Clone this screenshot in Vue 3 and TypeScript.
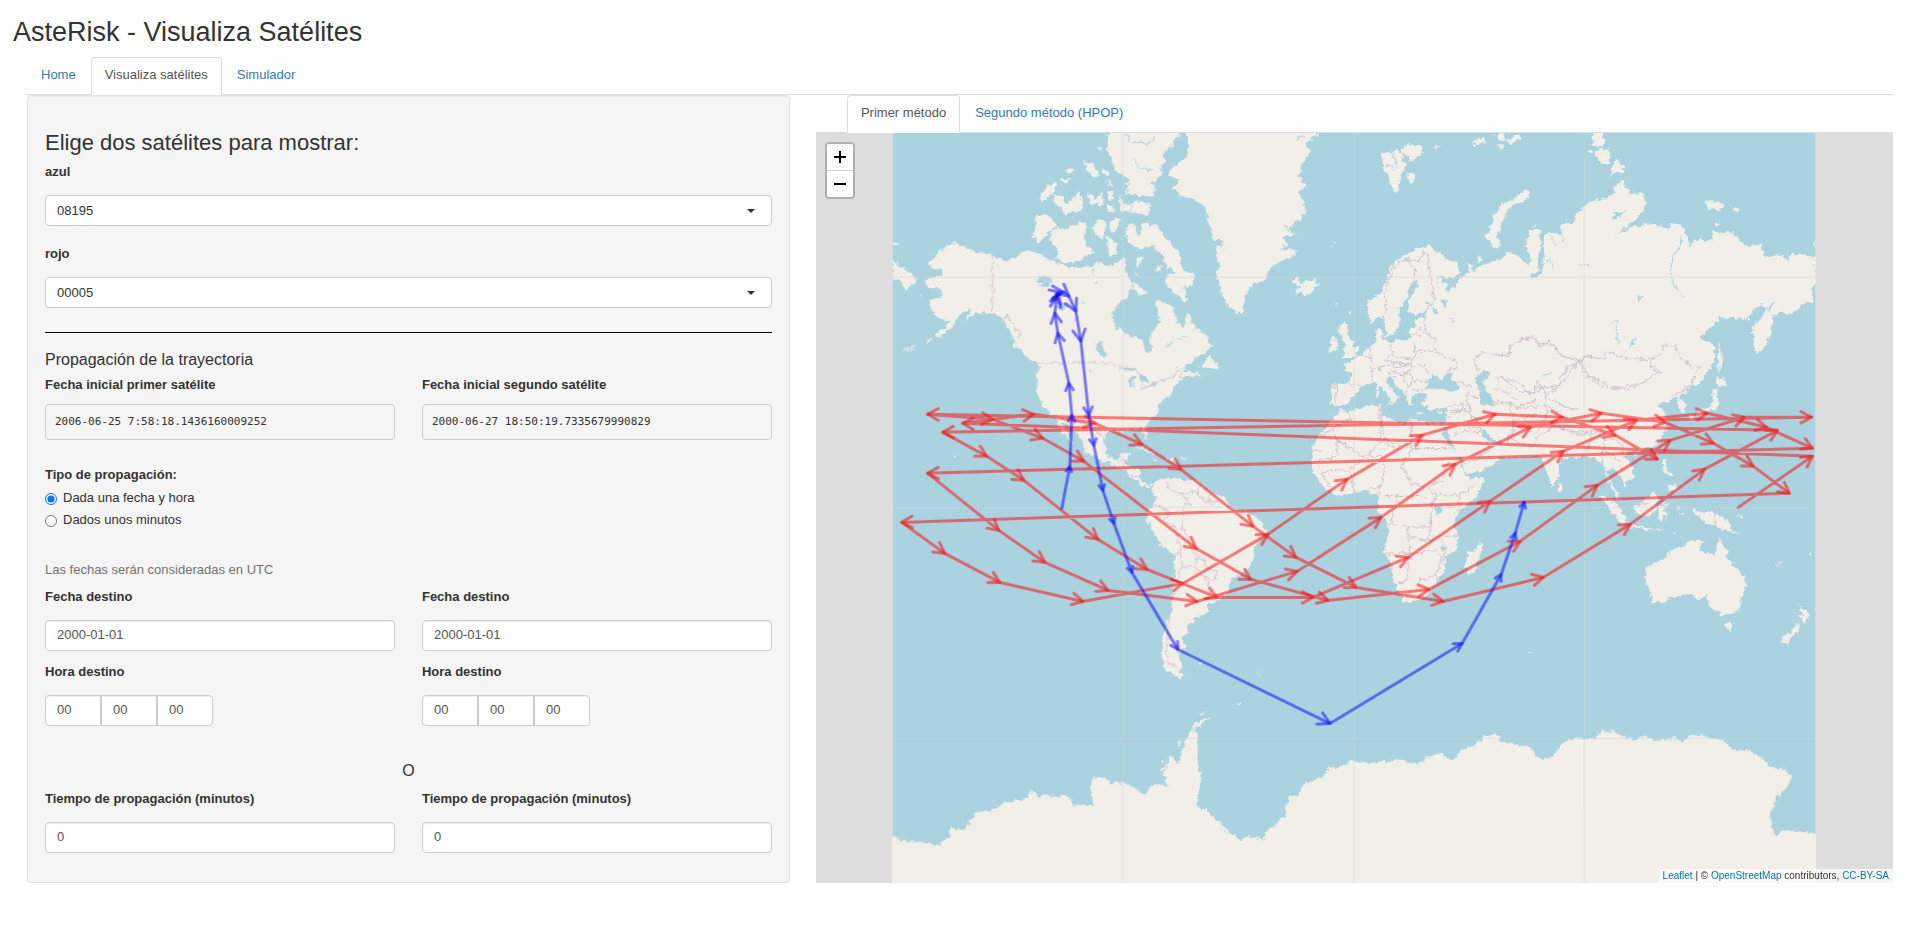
<script setup lang="ts">
import { ref } from 'vue'

type Point = [number, number]

interface Sheet {
  name: string
  transform: string
  land: string
  water?: string
  rivers?: string
  borders?: string
}

const mainTabs = ['Home', 'Visualiza satélites', 'Simulador']
const methodTabs = ['Primer método', 'Segundo método (HPOP)']
const activeMain = ref(1)
const activeMethod = ref(0)

const blueSat = ref('08195')
const redSat = ref('00005')
const mode = ref('fecha')

const satellites = [
  { id: 'first', start: '2006-06-25 7:58:18.1436160009252', title: 'Fecha inicial primer satélite' },
  { id: 'second', start: '2000-06-27 18:50:19.7335679990829', title: 'Fecha inicial segundo satélite' },
]
const timeParts = ['Horas', 'Minutos', 'Segundos']

/* Base map, split in regional sheets that overlap at their edges. */
const sheets: Sheet[] = [
  {
    name: 'north-america',
    transform: '',
    land: 'M953 243L946 247L938 252L933 260L928 263L933 269L942 270L942 277L933 277L925 281L930 288L942 288L942 297L931 300L930 305L933 312L940 318L950 321L944 327L950 326L957 318L963 312L973 308L965 320L977 313L988 313L997 314L1007 325L1013 337L1020 350L1027 357L1040 365L1037 377L1037 393L1042 405L1047 410L1054 417L1062 432L1067 438L1074 447L1070 436L1060 421L1067 424L1077 433L1083 443L1087 452L1097 458L1113 465L1123 469L1132 477L1140 484L1148 487L1155 485L1158 492L1164 484L1156 482L1148 485L1141 479L1140 469L1130 467L1125 463L1130 452L1122 453L1118 459L1110 458L1104 447L1105 433L1113 430L1127 432L1133 429L1142 430L1147 440L1148 435L1145 425L1158 413L1160 403L1170 395L1173 388L1179 381L1190 375L1194 378L1200 374L1190 372L1180 372L1190 362L1205 353L1211 347L1208 338L1202 332L1193 323L1189 312L1183 327L1177 320L1173 307L1163 301L1157 300L1157 313L1160 322L1150 335L1152 350L1147 353L1142 340L1127 333L1115 327L1112 313L1117 305L1127 298L1133 284L1127 275L1125 257L1117 262L1110 266L1100 263L1087 267L1067 267L1050 260L1038 253L1027 250L1017 256L1007 262L993 255L977 252L963 247Z',
    water: 'M1136 271l8-16l2 14l-6 10Z',
  },
  {
    name: 'arctic-canada',
    transform: 'translate(800 80) scale(0.3333)',
    land: 'M960 150L925 165L920 205L935 235L945 270L965 285L985 300L970 315L990 310L975 340L1060 350L1065 320L1045 310L1090 285L1080 270L1095 240L1090 215L1120 195L1130 170L1150 150ZM955 345L965 395L1045 405L1052 372L1010 362L975 375ZM850 240L880 250L900 290L880 293L862 270ZM905 262L930 280L925 292L912 285ZM800 268L820 265L815 280L795 280ZM785 300L812 290L815 300L795 310ZM745 315L772 308L765 335L740 355L720 360L725 340ZM760 345L790 345L800 375L840 330L850 385L795 403L785 385L765 370ZM862 338L890 355L908 335L910 375L890 370L875 375ZM922 340L935 330L945 355L925 360ZM920 375L942 375L940 395L922 395ZM893 205L903 205L900 220ZM925 295L940 305L930 318ZM705 405L740 403L775 435L745 455L720 490L697 468L708 440ZM775 440L800 450L845 425L858 430L855 490L885 515L860 530L820 550L790 545L762 530L775 515L750 480L755 455ZM875 445L900 417L920 425L910 480L890 465ZM930 420L965 415L945 455L930 450ZM920 470L950 490L950 520L930 530ZM975 465L985 432L1000 425L1015 470L1030 428L1070 435L1100 480L1140 520L1150 570L1190 585L1175 615L1150 620L1165 660L1155 668L1115 630L1095 610L1105 585L1125 580L1100 560L1090 530L1060 500L1020 505L990 490ZM1000 600L1040 640L1015 645L1000 625ZM1070 560h15v12h-15ZM1008 530L1035 530L1030 575L1010 590ZM280 540L320 570L355 598L340 615L318 630L300 600L280 605ZM280 483L300 488L290 496L280 495ZM1170 150L1165 200L1160 235L1115 260L1105 285L1140 300L1115 325L1150 350L1190 360L1215 380L1225 420L1240 480L1400 480L1400 150ZM358 642l10 4l-6 8ZM408 763L445 738L470 725L455 745L420 768ZM370 790L400 770L396 782ZM300 812L345 800L340 806ZM640 785L650 790L655 808L645 800Z',
    water: 'M700 600L740 590L755 600L730 612ZM765 680L790 668L805 676L780 688ZM885 790L905 785L912 810L920 830L900 820Z',
    rivers: 'M975 165L1000 185L1050 190L1070 165M1000 230L1020 265L1060 270M1000 405L985 330',
    borders: 'M578 525V695L610 720L622 705L645 740L663 765L658 775',
  },
  {
    name: 'north-atlantic',
    transform: 'translate(1200 120) scale(0.3333)',
    land: 'M-40 30L-20 220L10 240L30 290L38 340L65 355L70 385L45 378L45 405L60 430L50 470L65 520L90 565L125 583L135 540L155 490L190 485L215 435L260 420L295 395L270 385L240 390L265 370L245 350L290 345L265 320L300 300L320 270L295 215L320 200L298 170L305 130L330 95L320 70L365 30ZM275 478L295 475L300 490L345 475L357 495L318 527L285 515L300 500ZM5 740L30 700L34 722L55 733L55 752L38 745ZM545 98L570 95L590 88L605 100L615 140L600 170L592 220L572 195L568 165L550 150ZM600 90L625 70L665 80L668 100L640 122L615 105ZM620 150L640 160L647 185L625 190ZM705 80L718 76L712 86ZM975 212L990 212L985 235L950 250L925 265L905 310L890 350L903 380L885 382L858 355L870 320L885 280L910 250L945 235ZM832 412L846 412L842 422L834 422ZM810 65L850 50L855 65L830 75ZM885 45L910 40L915 60L895 60ZM920 60L960 45L960 55L930 72ZM890 78L915 72L912 85ZM395 375l8-3l-4 7ZM405 546l8 2l-5 6ZM448 578l6-6l-2 12Z',
    rivers: 'M250 318L285 345M245 375L275 375M580 100L592 150M560 130L580 150M290 60L310 45',
  },
  {
    name: 'siberia',
    transform: 'translate(1500 120) scale(0.3333)',
    land: 'M-20 430L20 400L50 405L85 435L95 420L75 375L92 330L118 330L120 380L110 430L122 440L132 400L130 350L150 335L180 345L200 385L205 400L185 345L182 315L225 305L230 275L270 245L310 235L340 225L340 200L365 182L380 200L390 220L430 220L437 245L430 275L405 300L370 325L350 343L400 320L430 310L475 315L510 328L512 308L550 318L555 345L572 380L580 360L635 360L640 335L700 340L735 378L785 375L790 405L850 408L870 400L940 410L945 415L945 500L930 505L940 545L915 550L870 582L835 575L815 590L812 640L800 670L785 680L768 705L760 670L757 625L790 580L815 560L825 540L800 570L790 555L765 558L745 598L700 592L655 595L600 655L625 665L645 680L640 730L600 790L575 795L545 820L500 845L-20 845ZM655 660L668 720L655 760L652 700ZM650 770L678 790L655 805L645 790ZM640 808h12l-4 40h-12ZM280 30L305 30L315 75L300 82L275 75ZM285 90L325 85L330 135L310 135L285 110ZM263 90h18l-5 12ZM350 115L372 150L340 160L328 172L335 145ZM615 245L630 235L640 250L655 240L675 258L655 270L640 265L625 275ZM685 258L718 265L712 276ZM642 308L665 315L650 320ZM935 372L945 362V378ZM98 318L108 314L105 324Z',
    water: 'M362 697L385 690L405 645L402 670L385 692ZM335 285L372 270L360 290L340 298ZM125 765L168 755L150 762L130 772ZM405 530L425 535L415 542ZM112 425L132 415L125 460L108 475L90 465L115 455ZM850 402L870 402L865 422L855 415Z',
    rivers: 'M542 345L540 380L515 410L510 450L520 495L548 525M130 420L150 418L160 445M235 435L265 432M325 605L350 602L345 630L355 670M145 345L160 370L170 372',
    borders: 'M-10 707L30 705L28 680L65 660L100 650L125 675L150 662L180 705L235 722L270 708L312 715L320 692L365 712L450 718L485 705L490 675L520 675L545 718L575 738L598 738L575 790L545 812L515 828M235 722L200 745L180 775L182 800L110 800L90 825L60 790L0 770M235 722L258 745L262 768L305 798L370 808L420 795L480 752L450 740L458 718M0 805L50 840',
  },
  {
    name: 'europe',
    transform: 'translate(1300 230) scale(0.3333)',
    land: 'M212 282L203 250L203 215L240 190L262 150L270 110L300 85L340 60L385 45L400 60L430 80L470 100L480 125L462 145L430 140L412 138L440 165L440 185L470 165L475 150L500 130L510 125L498 98L518 105L515 122L560 100L610 92L625 90L615 65L640 75L690 105L720 140L900 100L900 680L470 680L440 600L435 580L440 530L420 535L385 540L368 520L380 495L365 485L335 500L340 525L325 520L315 490L290 470L275 440L258 440L265 465L295 500L285 510L268 525L275 520L265 500L245 475L225 455L215 460L185 465L165 490L140 520L115 530L92 520L95 460L140 462L153 455L150 425L125 405L150 395L180 375L205 355L222 340L230 330L225 305L240 290L250 310L245 330L265 335L300 328L330 325L325 300L350 285L345 265L375 262L385 240L345 252L325 245L325 210L350 175L350 155L330 160L320 205L296 235L300 275L290 290L282 315L268 318L255 290L250 265L235 262ZM115 285L135 275L145 300L140 315L160 335L155 350L178 355L170 378L120 385L135 370L125 360L138 345L125 330L118 310ZM90 330L105 322L115 330L112 355L90 368L85 360L92 345ZM228 465l7-8l2 20l-7 2ZM228 483h10l-2 20h-8ZM255 520L278 515L278 528ZM345 548h25v5h-22ZM412 545l15-4l-8 8ZM252 312h12v10h-10Z',
    water: 'M382 455L395 432L410 440L425 450L440 430L460 425L450 440L480 470L475 482L440 480L400 475L378 475ZM525 440L550 425L570 430L560 445L545 455L560 480L578 500L578 525L548 528L540 490L530 465ZM535 585L560 610L580 628L610 632L600 645L570 640L545 610ZM397 230L410 235L412 250L398 245ZM428 205L440 220L436 235L428 225ZM450 262L460 270L455 280ZM368 492L382 490L378 500L366 498ZM425 600L440 610L460 655L450 655L430 620ZM378 215l10 3l-6 8ZM727 435L765 425L750 432L732 442Z',
    rivers: 'M405 150L415 170M355 150L350 160',
    borders: 'M250 265L258 240L255 190L280 110L322 85L343 112V150M322 85L355 95L370 65L385 75L382 100L395 150L403 210L380 240M375 262V300L345 290M325 310L360 315L375 305L405 325L405 360L345 365L340 330M405 360L435 380L470 390V415L440 420M272 340L275 372L300 382L340 388L345 365M275 372L258 385L280 400L330 400L340 388M210 345L212 385L180 372M212 385L215 415L240 415L265 405M215 415V450M265 405L290 410L330 400M265 430L290 425L300 435L330 425L335 405M280 440L310 435L320 465L335 465L330 430M335 450L380 455M330 405L370 405L390 430M335 480L370 480M320 465L320 490M108 325V335M92 470L110 475L105 520M150 462L185 468M470 455L505 465L530 475M500 480L510 500L535 505M495 485L505 520L440 530M505 520L515 570M440 560L480 540L485 525M440 580L500 590L535 590M520 390L550 365L590 375L630 370L632 345L690 320L720 345L750 332L780 375L832 392M520 390L535 420M592 480V440L620 450L650 480L700 490L720 475L780 465M592 480L580 480M578 520L630 515L650 535L700 510M630 515L640 590L635 625L690 650M650 535L720 530L740 525L735 540M700 610L735 580L740 540M832 392L860 380L900 385M832 392L860 435L900 450M832 392L780 465L735 495L735 525L780 545M145 535L150 565L60 620M235 525L245 560L238 630L300 660M330 580V655M780 590L840 615L880 610',
  },
  {
    name: 'africa-asia-oceania',
    transform: 'translate(1300 380) scale(0.338 0.3333)',
    land: 'M120 85L145 92L205 75L240 75L240 105L270 115L310 135L325 118L345 115L375 130L420 128L432 130L425 150L445 190L470 240L490 285L500 295L545 290L540 315L520 350L475 390L455 425L465 470L465 505L430 530L428 575L405 600L375 645L350 660L305 665L295 640L272 590L270 550L250 515L262 450L255 420L230 390L235 350L190 330L155 340L105 345L70 320L40 280L32 255L35 210L60 160L85 130L110 100ZM535 478L540 500L515 575L495 585L490 550L497 515L520 505ZM440 80L430 140L445 170L465 205L490 280L520 275L570 255L600 225L610 200L590 185L570 190L558 165L540 140L600 90ZM545 0L560 100L540 130L560 170L600 188L650 190L690 205L715 215L720 250L745 318L765 295L765 250L800 215L830 185L860 195L870 215L880 250L895 245L900 270L915 310L935 350L945 365L940 340L915 300L905 270L925 265L945 290L960 315L985 290L985 260L960 230L965 210L1010 210L1060 190L1085 140L1080 100L1055 75L1085 60L1060 50L1075 35L1110 40L1115 80L1135 98L1140 75L1125 50L1150 20L1165 -30L545 -30ZM762 305L775 318L772 333L763 332ZM885 340L915 355L950 390L965 425L945 425L910 380ZM970 432L1040 442L1045 450L975 440ZM985 375L1010 370L1045 335L1058 350L1050 390L1030 410L990 400ZM1060 375L1095 368L1070 380L1090 395L1080 400L1088 425L1072 400L1068 425L1060 420ZM1072 240L1085 240L1085 270L1105 285L1100 290L1075 275ZM1085 320L1110 310L1115 330L1095 335ZM1053 190l8-14l2 10l-6 14ZM985 222l14-2l-4 10ZM1160 385L1190 400L1200 395L1240 405L1270 425L1275 445L1300 462L1255 450L1235 440L1200 430L1185 410L1165 400ZM1235 5L1250 -8L1262 15L1230 25ZM1225 35L1240 70L1225 90L1190 100L1170 105L1175 90L1205 80L1220 60ZM1150 105h14l-5 22l-8-8ZM1050 446l30 2l-28 5ZM1095 458l22-10l-8 10ZM1238 468L1245 495L1262 510L1265 540L1305 575L1320 610L1305 660L1295 695L1250 705L1225 690L1205 670L1200 645L1185 660L1150 640L1100 650L1075 665L1040 668L1035 640L1020 590L1025 555L1080 535L1095 510L1130 500L1150 480L1190 480L1180 510L1225 525ZM1255 728L1283 725L1270 753ZM1470 670L1490 690L1508 695L1490 730L1475 710L1485 700ZM1475 725L1478 740L1440 790L1420 780L1455 750L1465 730ZM1402 540l18 14l-6 2ZM1502 520l12-3l-6 8ZM680 815l12 2l-8 6ZM1285 398l28 14l-8 2ZM1115 370l8 12l-6 10ZM1120 400h20v4h-20Z',
    water: 'M400 375L418 378L415 402L400 400ZM385 395L390 440L383 430ZM418 465L428 510L420 510Z',
    borders: 'M112 98L60 160M112 98L150 92M95 145L112 180V225L50 245M112 180L150 205L190 230L150 270M240 75L235 110L250 175L195 230M330 120V205H440M330 205L300 260L330 310L380 320L420 300L440 240M250 175L300 200M190 230L240 225L250 270L240 315L200 330M240 315L230 345M110 270L150 270L160 335M35 210H60M60 275L90 320M110 270L60 275M250 350L290 345L380 350M290 345L262 440M380 320L400 345L470 345L520 310M470 345V390M400 345L385 395L390 440L320 440L262 430M390 440L375 480L420 465L465 465M320 440L325 520H250M325 520L315 600L290 610M325 520L375 515L400 510L420 540L400 590L350 600M375 480L330 470M420 540L430 500M405 585L405 605M480 250L520 240L560 210M445 170L480 150L540 160M430 95L490 85L530 130M580 60L640 80L700 60M610 190L640 120L700 100M690 200L700 170L760 130L800 160L860 155M860 165L850 210M870 140L900 180L890 240M900 210L930 230L960 270M940 210L960 230M1115 60L1135 50M1228 405V440M990 375L1030 370M700 0L740 60L820 90M840 150L900 160L960 200M890 0L920 25L1000 10M90 12L110 15L105 60',
  },
  {
    name: 'south-america',
    transform: 'translate(880 380) scale(0.3333)',
    land: 'M815 330L825 310L860 292L885 290L910 300L950 300L985 335L1030 350L1060 390L1110 400L1150 430L1155 455L1125 490L1120 540L1100 570L1055 595L1045 630L1015 665L975 670L985 690L970 705L942 710L940 730L920 735L925 760L905 775L915 800L895 820L905 860L900 880L920 888L895 893L860 870L845 830L850 760L870 700L880 620L885 525L840 490L800 420L805 390L830 360ZM755 200L790 200L835 225L855 228L820 222L790 208ZM858 232L895 232L885 242L860 240ZM820 238h14v4h-14ZM905 236h10v4h-10ZM955 848l16-3l-8 8ZM1132 876l14 8l-4 2ZM222 222l10 6l-8 6ZM198 206l4 3l-4 2ZM955 1002l24-10l-16 14Z',
    borders: 'M862 295L865 325L905 340L935 370L910 375L905 440M905 340L945 335L955 345L990 370L985 345M955 345V320M805 375L830 375L870 395L850 420L880 435M905 440L925 475L940 520L975 535L975 560L1010 575L1005 600L970 590L1000 630L985 650M885 525L900 515L895 470L880 435M900 515L905 560L945 560L950 535L975 540M905 560L885 620L870 700L860 820L865 850L890 855M945 560L970 590M715 250L740 235M720 268L750 265M752 288L780 290M990 370L1025 365',
  },
  {
    name: 'great-lakes',
    transform: 'translate(960 260) scale(0.3333)',
    land: '',
    water: 'M475 325L500 318L535 325L510 335ZM510 350L525 345L520 385L508 378ZM535 345L560 350L565 370L545 360ZM545 388L590 366L592 371ZM408 245L420 262L440 290L425 290L412 265ZM295 145L325 135L320 148ZM235 78L280 60L262 84ZM370 120l8 12l-6 2ZM400 68l14-6l-8 10ZM384 322l8 14l-4 2Z',
    rivers: 'M400 20L395 45M620 260L640 240M340 185L355 175M655 235L680 230',
    borders: 'M238 308H452L480 318L520 325L545 350L550 385L600 360L640 350L650 328L662 335L665 355L685 350M262 465L300 470L330 480L380 490L410 515L432 535M480 600L500 598L502 620',
  },
  {
    name: 'antarctica',
    transform: 'translate(860 680) scale(0.676 0.3333)',
    land: 'M40 455L60 480L105 487L112 500L130 470L135 440L155 450L170 400L195 388L215 365L248 355L252 328L262 345L300 345L312 355L318 382L325 370L345 378L342 295L360 288L370 305L395 310L422 342L430 318L445 310L458 322L447 285L460 222L472 248L480 185L492 145L500 165L498 230L505 300L498 372L520 400L545 455L563 478L575 463L595 480L605 445L630 405L627 390L637 342L647 352L655 315L685 285L695 262L718 252L728 238L740 248L780 245L790 235L825 250L845 228L858 218L877 242L885 215L915 185L925 165L940 162L950 185L990 200L1000 220L1010 240L1025 225L1040 185L1058 170L1070 178L1090 172L1095 145L1105 158L1115 152L1125 168L1145 180L1158 160L1175 182L1205 172L1218 185L1225 165L1245 165L1280 185L1295 212L1312 210L1335 235L1345 258L1365 265L1377 290L1370 325L1355 350L1347 395L1347 440L1355 472L1362 450L1395 452L1420 465L1420 640L40 640ZM490 140L500 120L520 110L505 130L495 150ZM470 190l8-14l-4 24ZM444 262l10-4l-8 12ZM445 240h4v8h-4ZM502 100l8-8l-4 12ZM556 68h6v4h-6Z',
  },
]

const redTrack: Point[] = [
  [1738, 507], [1812, 456], [963, 423], [1034, 414], [1095, 423], [1142, 444], [1181, 469], [1253, 526],
  [1296, 557], [1356, 587], [1443, 601], [1543, 577], [1630, 524], [1704, 469], [1777, 430], [928, 414],
  [993, 419], [1043, 438], [1084, 461], [1196, 548], [1251, 579], [1328, 600], [1429, 589], [1520, 541],
  [1597, 485], [1670, 440], [1744, 417], [1811, 417], [943, 432], [987, 456], [1024, 480], [1098, 539],
  [1147, 569], [1217, 597], [1313, 597], [1408, 557], [1490, 501], [1563, 451], [1636, 420], [1707, 413],
  [1766, 427], [1812, 448], [928, 473], [999, 530], [1045, 562], [1108, 590], [1197, 601], [1297, 571],
  [1381, 517], [1455, 464], [1530, 427], [1601, 413], [1665, 422], [1713, 443], [1753, 466], [1789, 493],
  [902, 522], [945, 553], [1000, 582], [1083, 601], [1183, 583], [1268, 534], [1347, 479], [1422, 435],
  [1495, 414], [1562, 417], [1615, 435], [1657, 459],
]

const blueTrack: Point[] = [
  [1062, 508], [1070, 466], [1072, 415], [1069, 383], [1058, 333], [1055, 313], [1057, 297], [1058, 293],
  [1061, 292], [1064, 292], [1069, 296], [1076, 311], [1081, 341], [1089, 415], [1094, 445], [1103, 490],
  [1114, 523], [1132, 572], [1178, 649], [1330, 723], [1462, 643], [1501, 574], [1515, 533], [1524, 502],
]

const blueHeads = [6, 7, 8, 10, 11, 11, 11, 12, 13, 13, 13, 13, 9, 7, 6, 6, 6, 8, 13, 9, 7, 6, 6]

const tracks = [
  { name: 'red', color: '#ff0000', points: redTrack, sizes: redTrack.slice(1).map(() => 12) },
  { name: 'blue', color: '#0000ff', points: blueTrack, sizes: blueHeads },
].map((t) => ({
  name: t.name,
  color: t.color,
  line: 'M' + t.points.map((p) => p.join(' ')).join('L'),
  heads: t.sizes.map((size, i) => arrowHead(t.points[i], t.points[i + 1], size)),
}))

function arrowHead(from: Point, to: Point, size: number): string {
  const angle = Math.atan2(to[1] - from[1], to[0] - from[0])
  const arm = (side: number) => {
    const a = angle + Math.PI + side * 0.5
    return `${(to[0] + size * Math.cos(a)).toFixed(1)} ${(to[1] + size * Math.sin(a)).toFixed(1)}`
  }
  return `M${arm(-1)}L${to[0]} ${to[1]}L${arm(1)}`
}
</script>

<template>
  <div class="page">
    <h2 class="title">AsteRisk - Visualiza Satélites</h2>
    <div class="body">
      <nav class="tabs">
        <a
          v-for="(tab, i) in mainTabs"
          :key="tab"
          href="#"
          class="tab"
          :class="{ active: i === activeMain }"
          @click.prevent="activeMain = i"
        >{{ tab }}</a>
      </nav>

      <div class="columns">
        <form class="well" @submit.prevent>
          <h3 class="heading">Elige dos satélites para mostrar:</h3>
          <div class="field">
            <label for="blue">azul</label>
            <div class="picker">
              <select id="blue" v-model="blueSat" class="control">
                <option>08195</option>
                <option>00005</option>
              </select>
              <span class="caret"></span>
            </div>
          </div>
          <div class="field">
            <label for="red">rojo</label>
            <div class="picker">
              <select id="red" v-model="redSat" class="control">
                <option>00005</option>
                <option>08195</option>
              </select>
              <span class="caret"></span>
            </div>
          </div>
          <hr class="rule" />

          <h4 class="subheading">Propagación de la trayectoria</h4>
          <div class="pair starts">
            <div v-for="s in satellites" :key="s.id">
              <strong class="label">{{ s.title }}</strong>
              <pre class="output">{{ s.start }}</pre>
            </div>
          </div>

          <fieldset class="modes">
            <legend>Tipo de propagación:</legend>
            <label class="radio">
              <input v-model="mode" type="radio" name="mode" value="fecha" />
              <span>Dada una fecha y hora</span>
            </label>
            <label class="radio">
              <input v-model="mode" type="radio" name="mode" value="minutos" />
              <span>Dados unos minutos</span>
            </label>
          </fieldset>

          <p class="help">Las fechas serán consideradas en UTC</p>
          <div class="pair">
            <div v-for="s in satellites" :key="s.id">
              <div class="field date">
                <label :for="`date-${s.id}`">Fecha destino</label>
                <input :id="`date-${s.id}`" class="control" type="text" value="2000-01-01" />
              </div>
              <div class="field">
                <label :for="`time-${s.id}-Horas`">Hora destino</label>
                <div class="time">
                  <input
                    v-for="part in timeParts"
                    :id="`time-${s.id}-${part}`"
                    :key="part"
                    class="control"
                    type="text"
                    value="00"
                    :aria-label="part"
                  />
                </div>
              </div>
            </div>
          </div>

          <h4 class="or">O</h4>
          <div class="pair">
            <div v-for="s in satellites" :key="s.id" class="field minutes">
              <label :for="`minutes-${s.id}`">Tiempo de propagación (minutos)</label>
              <input :id="`minutes-${s.id}`" class="control" type="text" value="0" />
            </div>
          </div>
        </form>

        <section class="viewer">
          <nav class="tabs inner">
            <a
              v-for="(tab, i) in methodTabs"
              :key="tab"
              href="#"
              class="tab"
              :class="{ active: i === activeMethod }"
              @click.prevent="activeMethod = i"
            >{{ tab }}</a>
          </nav>
          <div class="map">
            <svg class="world" viewBox="816 133 1077 749" preserveAspectRatio="xMidYMid slice" aria-hidden="true">
              <defs>
                <clipPath id="world-clip"><rect x="893" y="46" width="922" height="922" /></clipPath>
                <filter id="coast" filterUnits="userSpaceOnUse" x="880" y="120" width="950" height="780" color-interpolation-filters="sRGB">
                  <feTurbulence type="fractalNoise" baseFrequency="0.2" numOctaves="3" seed="4" result="noise" />
                  <feDisplacementMap in="SourceGraphic" in2="noise" scale="7" xChannelSelector="R" yChannelSelector="G" />
                </filter>
              </defs>
              <g clip-path="url(#world-clip)">
                <rect x="893" y="46" width="922" height="922" fill="#aad3df" />
                <g filter="url(#coast)">
                  <g v-for="s in sheets" :key="s.name" :transform="s.transform">
                    <path :d="s.land" fill="#f2efe9" />
                  </g>
                  <g v-for="s in sheets" :key="s.name" :transform="s.transform">
                    <path v-if="s.water" :d="s.water" fill="#aad3df" />
                    <path v-if="s.rivers" :d="s.rivers" class="river" />
                    <path v-if="s.borders" :d="s.borders" class="border" />
                  </g>
                </g>
                <path class="grid" d="M893 277H1815M893 507H1815M893 738H1815M1123 46V968M1354 46V968M1584 46V968" />
              </g>
              <g v-for="t in tracks" :key="t.name" class="track" :stroke="t.color">
                <path :d="t.line" />
                <path v-for="(head, i) in t.heads" :key="i" :d="head" />
              </g>
            </svg>
            <div class="zoom">
              <button type="button" aria-label="Zoom in">
                <svg viewBox="0 0 12 12"><path d="M6 0V12M0 6H12" /></svg>
              </button>
              <button type="button" aria-label="Zoom out">
                <svg viewBox="0 0 12 12"><path d="M0 6H12" /></svg>
              </button>
            </div>
            <div class="attribution">
              <a href="#">Leaflet</a> | © <a href="#">OpenStreetMap</a> contributors, <a href="#">CC-BY-SA</a>
            </div>
          </div>
        </section>
      </div>
    </div>
  </div>
</template>

<style>
body {
  margin: 0;
  background: #fff;
}
</style>

<style scoped>
.page {
  box-sizing: border-box;
  padding: 0 13px;
  font: 13px/18px "Liberation Sans", Arial, sans-serif;
  color: #333;
}
.page *,
.page *::before {
  box-sizing: border-box;
}
h2, h3, h4 {
  margin: 0;
  font-weight: 400;
}
a {
  color: #337ab7;
  text-decoration: none;
}
.title {
  padding: 17px 0 10px;
  font-size: 27px;
  line-height: 30px;
}
.body {
  padding: 0 14px;
}
.tabs {
  display: flex;
  gap: 1px;
  border-bottom: 1px solid #ddd;
}
.tab {
  margin-bottom: -1px;
  padding: 8px 13px 10px;
  border: 1px solid transparent;
  border-radius: 4px 4px 0 0;
}
.tab.active {
  color: #555;
  background: #fff;
  border-color: #ddd #ddd transparent;
}
.inner {
  padding-left: 31px;
}
.columns {
  display: grid;
  grid-template-columns: 17fr 24fr;
  gap: 26px;
  align-items: start;
}
.well {
  padding: 17px 17px 29px;
  background: #f5f5f5;
  border: 1px solid #e3e3e3;
  border-radius: 4px;
  box-shadow: inset 0 1px 1px rgba(0, 0, 0, 0.05);
}
.heading {
  margin: 18px 0 8px;
  font-size: 22px;
  line-height: 24px;
}
.field label,
.label,
legend {
  display: block;
  font-weight: 700;
}
.field label {
  margin-bottom: 14px;
}
.field + .field {
  margin-top: 19px;
}
.date + .field {
  margin-top: 12px;
}
.picker {
  position: relative;
}
.control {
  display: block;
  width: 100%;
  height: 31px;
  margin: 0;
  padding: 0 11px 2px;
  font: inherit;
  color: #555;
  background: #fff;
  border: 1px solid #ccc;
  border-radius: 4px;
  box-shadow: inset 0 1px 1px rgba(0, 0, 0, 0.07);
  appearance: none;
}
select.control {
  padding-bottom: 0;
  color: #333;
  box-shadow: none;
}
.caret {
  position: absolute;
  top: 14px;
  right: 17px;
  border: 4px solid transparent;
  border-top-color: #333;
  border-bottom: 0;
  pointer-events: none;
}
.rule {
  margin: 24px 0 18px;
  border: 0;
  border-top: 1px solid #000;
}
.subheading,
.or {
  font-size: 16px;
  line-height: 18px;
}
.pair {
  display: grid;
  grid-template-columns: 1fr 1fr;
  gap: 27px;
}
.pair > .field + .field {
  margin-top: 0;
}
.starts {
  margin-top: 7px;
}
.output {
  margin: 10px 0 0;
  padding: 8px 9px;
  font: 11px/18px "DejaVu Sans Mono", monospace;
  border: 1px solid #ccc;
  border-radius: 4px;
}
.modes {
  margin: 26px 0 0;
  padding: 0;
  border: 0;
}
legend {
  padding: 0;
  margin-bottom: 5px;
}
.radio {
  display: flex;
  gap: 6px;
}
.radio + .radio {
  margin-top: 4px;
}
.radio input {
  width: 12px;
  height: 12px;
  margin: 4px 0 0;
}
.help {
  margin: 32px 0 9px;
  color: #737373;
}
.time {
  display: flex;
}
.time .control {
  width: 56px;
  border-radius: 0;
}
.time .control:first-child {
  border-radius: 4px 0 0 4px;
}
.time .control:last-child {
  border-radius: 0 4px 4px 0;
}
.or {
  margin: 36px 0 10px;
  text-align: center;
}
.map {
  position: relative;
  height: 80vh;
  overflow: hidden;
  background: #ddd;
}
.world {
  display: block;
  width: 100%;
  height: 100%;
}
.river,
.border,
.grid,
.track {
  fill: none;
}
.river {
  stroke: #aad3df;
  stroke-width: 3px;
}
.border {
  stroke: #d3c2cf;
  stroke-width: 3px;
  stroke-linejoin: round;
}
.grid {
  stroke: #d8d4dc;
  stroke-opacity: 0.5;
}
.track path {
  stroke-width: 3px;
  stroke-opacity: 0.5;
  stroke-linecap: round;
  stroke-linejoin: round;
}
.zoom {
  position: absolute;
  top: 9px;
  left: 9px;
  border: 2px solid rgba(0, 0, 0, 0.2);
  border-radius: 4px;
  background-clip: padding-box;
}
.zoom button {
  display: grid;
  place-items: center;
  width: 26px;
  height: 26px;
  padding: 0;
  background: #fff;
  border: 0;
  border-radius: 0 0 2px 2px;
}
.zoom button:first-child {
  height: 27px;
  border-bottom: 1px solid #ccc;
  border-radius: 2px 2px 0 0;
}
.zoom svg {
  width: 12px;
  height: 12px;
  fill: none;
  stroke: #000;
  stroke-width: 2px;
}
.attribution {
  position: absolute;
  right: 0;
  bottom: 0;
  padding: 0 4px;
  font-size: 10px;
  line-height: 14px;
  background: rgba(255, 255, 255, 0.7);
}
.attribution a {
  color: #0078a8;
}
</style>
